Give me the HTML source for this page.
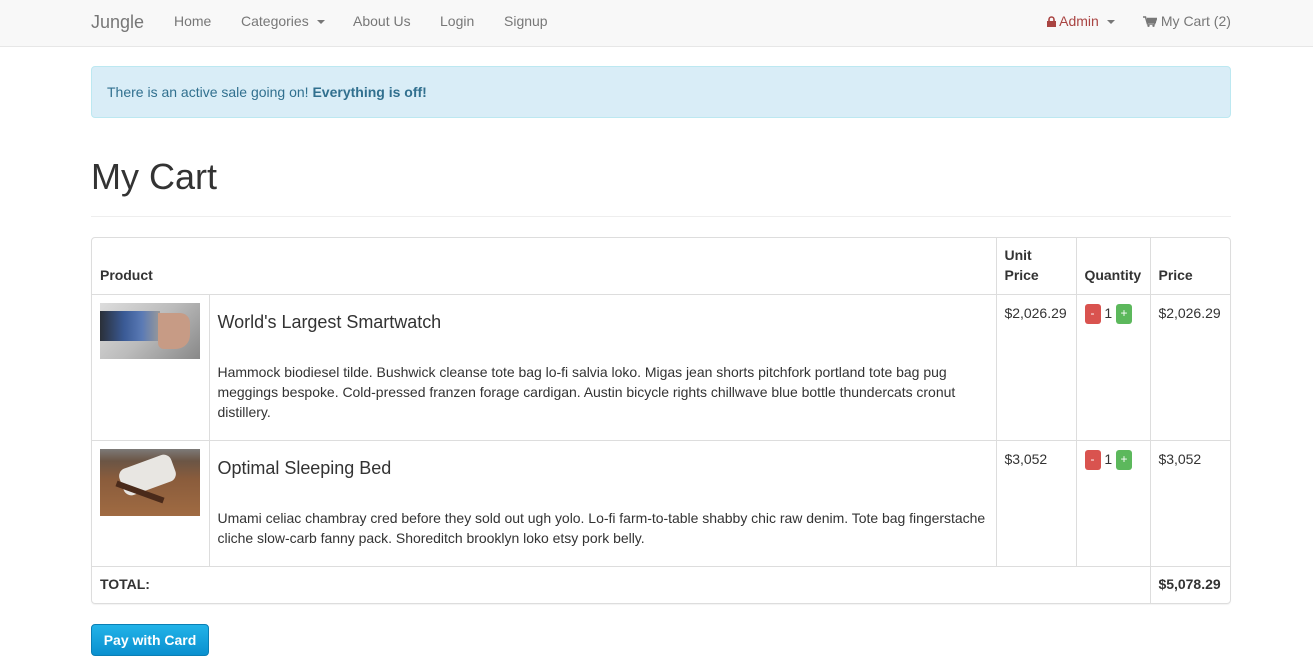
<!DOCTYPE html>
<html><head><meta charset="utf-8"><style>
*{box-sizing:border-box}
body{margin:0;font-family:"Liberation Sans",Helvetica,Arial,sans-serif;font-size:14px;line-height:1.42857;color:#333;background:#fff;width:1313px;height:670px;overflow:hidden}
.nav{height:47px;background:#f8f8f8;border-bottom:1px solid #e7e7e7;position:relative}
.nav a{position:absolute;top:12px;color:#777;text-decoration:none;font-size:14px}
.brand{font-size:18px!important;top:10px!important}
.caret{display:inline-block;width:0;height:0;border-top:4px solid;border-left:4px solid transparent;border-right:4px solid transparent;vertical-align:middle;margin-left:4px}
.wrap{position:absolute;left:91px;width:1140px}
.alert{top:66px;height:52px;background:#d9edf7;border:1px solid #bce8f1;border-radius:4px;color:#31708f;padding:16px 15px}
h1{margin:0;font-size:36px;font-weight:500;top:155px;line-height:44px}
.hr{top:216px;height:1px;background:#eee}
table{border-collapse:collapse;width:100%}
.tbl{top:237px;border:1px solid #ddd;border-radius:4px;overflow:hidden;box-shadow:0 1px 1px rgba(0,0,0,.05);letter-spacing:-0.02px}
td,th{padding:8px;vertical-align:top;border-top:1px solid #ddd;text-align:left}
td{padding-top:9px}
th{vertical-align:bottom;font-weight:bold;border-top:0}
td+td,th+th{border-left:1px solid #ddd}
h4{font-size:18px;font-weight:500;margin:8px 0 31px;line-height:20px}
p{margin:0}
.b{display:inline-block;width:16px;height:20px;border-radius:3px;color:#fff;font-size:12px;text-align:center;line-height:19px;vertical-align:middle}
.btn{top:624px;height:32px;width:118px;border-radius:4px;background:linear-gradient(#22b3e8,#0a90cf);border:1px solid #0a7fb5;color:#fff;font-weight:bold;font-size:14px;text-align:center;line-height:30px}
</style></head><body>
<div class="nav">
<a class="brand" style="left:91px">Jungle</a>
<a style="left:174px">Home</a>
<a style="left:241px">Categories <span class="caret"></span></a>
<a style="left:353px">About Us</a>
<a style="left:440px">Login</a>
<a style="left:504px">Signup</a>
<a style="left:1047px;color:#a94442"><svg width="9" height="11" viewBox="0 0 9 11" style="vertical-align:-1px"><path d="M2 5V3.5a2.5 2.5 0 0 1 5 0V5" fill="none" stroke="#a94442" stroke-width="1.6"/><rect x="0" y="5" width="9" height="6" fill="#a94442"/></svg> Admin <span class="caret" style="color:#777"></span></a>
<a style="left:1143px"><svg width="14" height="11" viewBox="0 0 14 11" style="vertical-align:-1px"><path d="M0 1h2.5l2 7h7l2-5.5H4" fill="none" stroke="#777" stroke-width="1.5"/><rect x="4" y="3" width="9" height="4" fill="#777"/><circle cx="5.5" cy="9.8" r="1.2" fill="#777"/><circle cx="10.5" cy="9.8" r="1.2" fill="#777"/></svg> My Cart (2)</a>
</div>
<div class="wrap alert">There is an active sale going on! <b>Everything is off!</b></div>
<h1 class="wrap">My Cart</h1>
<div class="wrap hr"></div>
<div class="wrap tbl"><table>
<tr style="height:56px"><th colspan="2">Product</th><th style="width:80px">Unit Price</th><th style="width:74px">Quantity</th><th style="width:80px">Price</th></tr>
<tr style="height:146px"><td style="width:117px;padding-top:8px"><div style="width:100px;height:56px;position:relative;background:linear-gradient(135deg,#ddd,#bbb 50%,#888);overflow:hidden"><div style="position:absolute;left:0;top:8px;width:60px;height:30px;background:linear-gradient(90deg,#2a2f38,#3a5a95 40%,#5a7ab5 70%,#999)"></div><div style="position:absolute;left:58px;top:10px;width:32px;height:36px;background:#c79b85;border-radius:0 10px 14px 6px"></div></div></td><td><h4>World's Largest Smartwatch</h4><p>Hammock biodiesel tilde. Bushwick cleanse tote bag lo-fi salvia loko. Migas jean shorts pitchfork portland tote bag pug meggings bespoke. Cold-pressed franzen forage cardigan. Austin bicycle rights chillwave blue bottle thundercats cronut distillery.</p></td><td>$2,026.29</td><td><span class="b" style="background:#d9534f">-</span> 1 <span class="b" style="background:#5cb85c">+</span></td><td>$2,026.29</td></tr>
<tr style="height:126px"><td style="padding-top:8px"><div style="width:100px;height:67px;position:relative;background:linear-gradient(#7d7a78 0,#6b5545 18%,#8a5c3c 45%,#a06b42);overflow:hidden"><div style="position:absolute;left:20px;top:12px;width:55px;height:28px;background:#e8e6e2;transform:rotate(-20deg);border-radius:8px"></div><div style="position:absolute;left:15px;top:40px;width:50px;height:6px;background:#4a2a1a;transform:rotate(20deg)"></div></div></td><td><h4>Optimal Sleeping Bed</h4><p>Umami celiac chambray cred before they sold out ugh yolo. Lo-fi farm-to-table shabby chic raw denim. Tote bag fingerstache cliche slow-carb fanny pack. Shoreditch brooklyn loko etsy pork belly.</p></td><td>$3,052</td><td><span class="b" style="background:#d9534f">-</span> 1 <span class="b" style="background:#5cb85c">+</span></td><td>$3,052</td></tr>
<tr style="height:37px"><th colspan="4" style="border-top:1px solid #ddd;vertical-align:top">TOTAL:</th><th style="border-top:1px solid #ddd;border-left:1px solid #ddd;vertical-align:top">$5,078.29</th></tr>
</table></div>
<div class="wrap btn" style="width:118px">Pay with Card</div>
</body></html>
